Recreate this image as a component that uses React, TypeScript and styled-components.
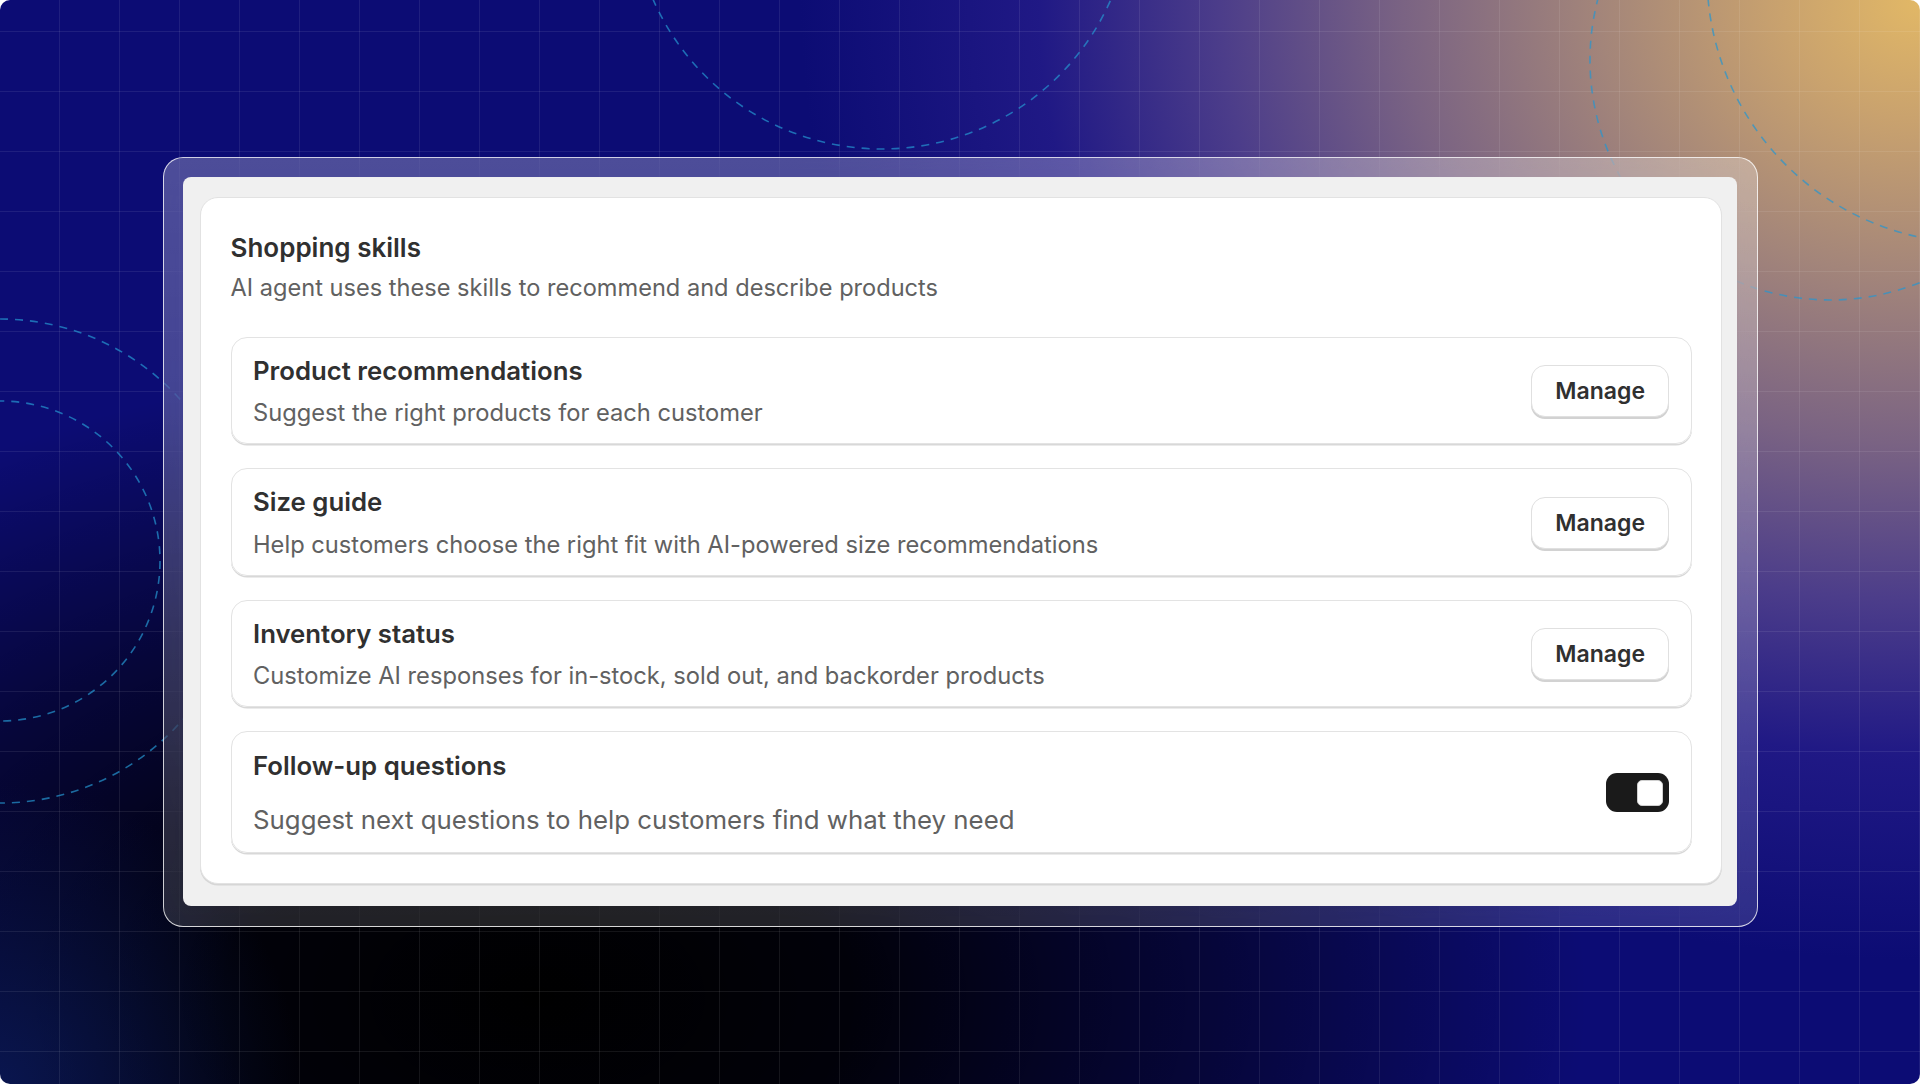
import styled, { createGlobalStyle } from "styled-components";

const GlobalStyle = createGlobalStyle`
  html, body {
    margin: 0;
    padding: 0;
    background: #ffffff;
  }
  body {
    font-family: Inter, "Noto Sans", sans-serif;
    -webkit-font-smoothing: antialiased;
  }
`;

type Skill = {
  title: string;
  description: string;
  control: "manage" | "toggle";
};

const skills: Skill[] = [
  {
    title: "Product recommendations",
    description: "Suggest the right products for each customer",
    control: "manage",
  },
  {
    title: "Size guide",
    description:
      "Help customers choose the right fit with AI-powered size recommendations",
    control: "manage",
  },
  {
    title: "Inventory status",
    description:
      "Customize AI responses for in-stock, sold out, and backorder products",
    control: "manage",
  },
  {
    title: "Follow-up questions",
    description: "Suggest next questions to help customers find what they need",
    control: "toggle",
  },
];

// dashed rings scattered over the backdrop
const rings = [
  { cx: 882, cy: -101, r: 250 },
  { cx: 1830, cy: 60, r: 240 },
  { cx: 1975, cy: -25, r: 268 },
  { cx: 0, cy: 561, r: 160 },
  { cx: 0, cy: 561, r: 242 },
];

export default function App() {
  return (
    <>
      <GlobalStyle />
      <Page>
        <Rings viewBox="0 0 1920 1084" aria-hidden>
          {rings.map((ring, i) => (
            <circle key={i} cx={ring.cx} cy={ring.cy} r={ring.r} />
          ))}
        </Rings>
        <Frame>
          <Panel>
            <Card>
              <Title>Shopping skills</Title>
              <Subtitle>
                AI agent uses these skills to recommend and describe products
              </Subtitle>
              <SkillList>
                {skills.map((skill) => {
                  const isToggle = skill.control === "toggle";
                  return (
                    <SkillRow key={skill.title} $toggle={isToggle}>
                      <SkillText>
                        <SkillTitle>{skill.title}</SkillTitle>
                        <SkillDescription $toggle={isToggle}>
                          {skill.description}
                        </SkillDescription>
                      </SkillText>
                      {isToggle ? (
                        <Toggle role="switch" aria-checked="true">
                          <Knob />
                        </Toggle>
                      ) : (
                        <ManageButton type="button">Manage</ManageButton>
                      )}
                    </SkillRow>
                  );
                })}
              </SkillList>
            </Card>
          </Panel>
        </Frame>
      </Page>
    </>
  );
}

const Page = styled.main`
  position: relative;
  width: 1920px;
  height: 1084px;
  border-radius: 10px;
  overflow: hidden;
  display: flex;
  align-items: center;
  justify-content: center;
  background-color: #0c0c74;
  background-image:
    linear-gradient(rgba(255, 255, 255, 0.08) 1px, transparent 1px),
    linear-gradient(90deg, rgba(255, 255, 255, 0.08) 1px, transparent 1px),
    radial-gradient(
      ellipse 1400px 1200px at 100% 0%,
      #e2b866 0%,
      #c9a26e 10%,
      #a3857a 23%,
      #7a6383 37%,
      #4c3d8a 50%,
      rgba(40, 30, 140, 0.7) 63%,
      rgba(12, 12, 116, 0) 80%
    ),
    radial-gradient(
      300px circle at 0% 100%,
      rgba(14, 36, 110, 0.55) 0%,
      rgba(14, 36, 110, 0) 100%
    ),
    radial-gradient(
      ellipse 1050px 640px at 28% 92%,
      #000000 0%,
      rgba(0, 0, 0, 0.92) 30%,
      rgba(0, 0, 0, 0.5) 65%,
      rgba(0, 0, 0, 0) 100%
    );
  background-size: 60px 60px, 60px 60px, auto, auto, auto;
  background-position: 0 31px, 59px 0, 0 0, 0 0, 0 0;
`;

const Rings = styled.svg`
  position: absolute;
  inset: 0;
  width: 100%;
  height: 100%;
  fill: none;
  stroke: #2596d1;
  stroke-width: 1.6;
  stroke-dasharray: 8 7;
  opacity: 0.7;
`;

const Frame = styled.section`
  position: relative;
  z-index: 1;
  width: 1595px;
  box-sizing: border-box;
  padding: 19.5px 19.5px 20.5px;
  border: 1.5px solid rgba(255, 255, 255, 0.78);
  border-radius: 20px;
  background: linear-gradient(
    180deg,
    rgba(255, 255, 255, 0.27),
    rgba(255, 255, 255, 0.13)
  );
  backdrop-filter: blur(28px);
`;

const Panel = styled.div`
  background: #f0f0f0;
  border-radius: 8px;
  padding: 20px 15px 22px 17px;
`;

const Card = styled.div`
  background: #ffffff;
  border: 1.5px solid #e2e2e2;
  box-shadow: 0 1.5px 0 #d6d6d6;
  border-radius: 18px;
  padding: 34px 29.5px 29.5px;
`;

const Title = styled.h2`
  margin: 0;
  font-size: 26px;
  line-height: 32px;
  font-weight: 600;
  color: #303030;
`;

const Subtitle = styled.p`
  margin: 9px 0 0;
  font-size: 23.6px;
  line-height: 30px;
  color: #616161;
`;

const SkillList = styled.div`
  display: flex;
  flex-direction: column;
  gap: 24px;
  margin-top: 33.5px;
`;

const SkillRow = styled.div<{ $toggle?: boolean }>`
  display: flex;
  align-items: center;
  justify-content: space-between;
  gap: 24px;
  border: 1.5px solid #e3e3e3;
  box-shadow: 0 1.5px 0 #d8d8d8;
  border-radius: 16px;
  padding: ${({ $toggle }) => ($toggle ? "17px 21.5px 16px" : "16px 21.5px 15px")};
`;

const SkillText = styled.div`
  display: flex;
  flex-direction: column;
  padding-top: 2px;
`;

const SkillTitle = styled.h3`
  margin: 0;
  font-size: 25.75px;
  line-height: 30px;
  font-weight: 600;
  color: #303030;
`;

const SkillDescription = styled.p<{ $toggle?: boolean }>`
  margin: ${({ $toggle }) => ($toggle ? "23px" : "12.5px")} 0 0;
  font-size: ${({ $toggle }) => ($toggle ? "25.8px" : "23.7px")};
  line-height: ${({ $toggle }) => ($toggle ? "32px" : "30px")};
  color: #616161;
`;

const ManageButton = styled.button`
  flex-shrink: 0;
  height: 52px;
  box-sizing: border-box;
  padding: 0 23px;
  border: 1.5px solid #e0e0e0;
  border-radius: 14px;
  background: #ffffff;
  box-shadow: 0 2px 0 #d2d2d2;
  font-family: inherit;
  font-size: 23px;
  font-weight: 600;
  color: #303030;
  cursor: pointer;
`;

const Toggle = styled.div`
  flex-shrink: 0;
  width: 63px;
  height: 39px;
  box-sizing: border-box;
  padding: 0 6px;
  display: flex;
  align-items: center;
  justify-content: flex-end;
  background: #1a1a1a;
  border-radius: 11px;
`;

const Knob = styled.span`
  width: 26px;
  height: 26px;
  box-sizing: border-box;
  border: 1.5px solid #d0d0d0;
  border-radius: 5px;
  background: #ffffff;
`;
